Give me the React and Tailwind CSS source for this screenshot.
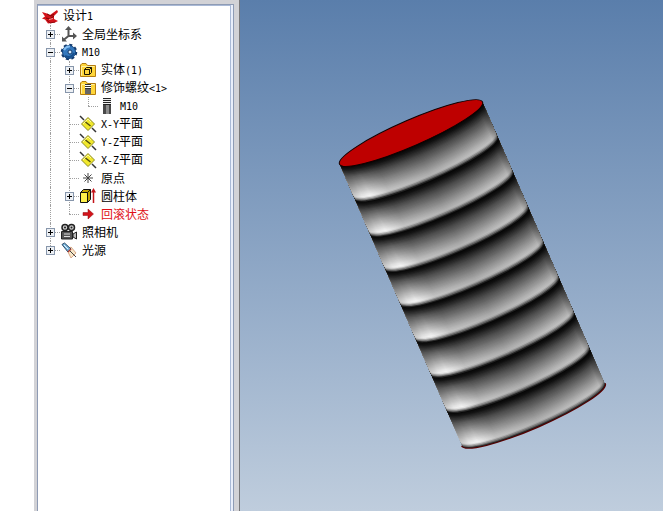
import { useState } from "react";

const TREE = {
  label: "设计1",
  icon: "design",
  children: [
    { label: "全局坐标系", icon: "axes", closed: true },
    {
      label: "M10",
      icon: "gear",
      children: [
        { label: "实体(1)", icon: "solids", closed: true },
        {
          label: "修饰螺纹<1>",
          icon: "threads",
          children: [{ label: "M10", icon: "thread" }],
        },
        { label: "X-Y平面", icon: "plane" },
        { label: "Y-Z平面", icon: "plane" },
        { label: "X-Z平面", icon: "plane" },
        { label: "原点", icon: "origin" },
        { label: "圆柱体", icon: "extrude", closed: true },
        { label: "回滚状态", icon: "arrow", red: true },
      ],
    },
    { label: "照相机", icon: "camera", closed: true },
    { label: "光源", icon: "light", closed: true },
  ],
};

function Folder({ children }) {
  return (
    <>
      <path d="M1.5 15.5V4L3 2.5h4L8.500 4.500h8v11z" fill="#ffd63a" stroke="#b47d10" />
      <path d="M2.500 14.500v-9h13" fill="none" stroke="#fff0a0" />
      {children}
    </>
  );
}

const ICONS = {
  design: (
    <>
      <path d="M1 5l5 1.500 3 1.500 7-5 1 2-4 4v3l4 2-3 1.500-7 1-3-4-3-1 3-2z" fill="#d3131a" />
      <path d="M6 7l4 2 3-2M5 11l4 1 4-3" fill="none" stroke="#7c0508" />
      <path d="M6 13l3 3 5-1" fill="none" stroke="#8f0a0e" />
      <path d="M8 12.500l4-1" stroke="#ff9b98" />
    </>
  ),
  axes: (
    <>
      <path d="M8.500 3v8h6M8.500 11l-5 4" fill="none" stroke="#555" strokeWidth="2" />
      <path d="M5 5l3.500-4L12 5zM13 7.500l4 3.500-4 3.500zM2 11.500v5h5z" fill="#555" />
    </>
  ),
  gear: (
    <>
      <circle cx="9" cy="9" r="7" fill="none" stroke="#12396b" strokeWidth="2.500" strokeDasharray="3 2.500" />
      <circle cx="9" cy="9" r="6.500" fill="#3478bd" stroke="#15457e" />
      <path d="M4 7q2-4 6-3.500" fill="none" stroke="#83bdf0" strokeWidth="2" />
      <path d="M5 13q6 3 9-3" fill="none" stroke="#174f8d" strokeWidth="2" />
      <circle cx="10" cy="9" r="2" fill="#d6ecff" stroke="#123768" />
    </>
  ),
  solids: (
    <Folder>
      <path d="M5.500 8.500l2-2h5v5l-2 2h-5zM5.500 8.500h5v5M10.500 8.500l2-2" fill="none" stroke="#1c1600" />
    </Folder>
  ),
  threads: (
    <Folder>
      <path d="M6 5h6v10H6z" fill="#666" />
      <path d="M6 6.500h6M6 8.500h6" stroke="#fff" />
      <path d="M6 5.500h6M6 7.500h6M6 9.500h6" stroke="#333" />
    </Folder>
  ),
  thread: (
    <>
      <path d="M5 8h8v9H5z" fill="#484848" />
      <path d="M8 8h3v9H8z" fill="#8c8c8c" />
      <path d="M5 1.500h8M5 3.500h8M5 5.500h8M5 7.500h8" stroke="#222" />
      <path d="M5 2.500h8M5 4.500h8M5 6.500h8" stroke="#eee" />
    </>
  ),
  plane: (
    <>
      <path d="M1 1l4 4M13 13l4 4" stroke="#333" strokeWidth="1.500" />
      <path d="M9 2.500L15.500 9 9 15.500 2.500 9z" fill="#f1e82c" stroke="#8c8a28" />
      <path d="M4 9l5-5 3 3" fill="none" stroke="#fffb9b" />
      <path d="M6.500 7l5 4" stroke="#4d4a10" strokeWidth="1.500" />
    </>
  ),
  origin: <path d="M9 4v10M4 9h10M5.500 5.500l7 7M12.500 5.500l-7 7" stroke="#444" />,
  extrude: (
    <>
      <path d="M1.500 5.500l3-3h7v10l-3 3h-7z" fill="#c3a600" stroke="#111" />
      <path d="M2 6h6v9H2z" fill="#fff04a" />
      <path d="M1.500 5.500h7v10M8.500 5.500l3-3" fill="none" stroke="#111" />
      <path d="M14.500 16V4" stroke="#c3141a" strokeWidth="1.500" />
      <path d="M12 5.500L14.500 1 17 5.500z" fill="#c3141a" />
    </>
  ),
  arrow: <path d="M4 7.500h5V4l5.500 5L9 14v-3.500H4z" fill="#d3131a" stroke="#8f0a0e" strokeWidth=".5" />,
  camera: (
    <>
      <circle cx="5" cy="4.500" r="3" fill="#ccc" stroke="#222" strokeWidth="1.500" />
      <circle cx="11.500" cy="4.500" r="3" fill="#ccc" stroke="#222" strokeWidth="1.500" />
      <circle cx="5" cy="4.500" r="1" fill="#222" />
      <circle cx="11.500" cy="4.500" r="1" fill="#222" />
      <path d="M1.500 8.500h11V16h-11z" fill="#555" stroke="#222" />
      <path d="M4 11h6M4 13.500h6" stroke="#ddd" />
      <path d="M13 11l3.500-2v7L13 14z" fill="#bbb" stroke="#222" />
    </>
  ),
  light: (
    <>
      <path d="M7 9l4-3 5 6-5 5z" fill="#f8e7c8" stroke="#d8a98a" />
      <path d="M2 3.500L4.500 2 11 8l-3 3z" fill="#76b4dc" stroke="#2d4b68" />
      <path d="M4 4l4 4" stroke="#e6f7ff" />
      <path d="M8 11l3-3" stroke="#b3382c" strokeWidth="1.500" />
      <path d="M10 10l6 6" stroke="#444" />
    </>
  ),
};

function NodeIcon({ name }) {
  return (
    <svg viewBox="0 0 18 18" className="h-[18px] w-[18px] shrink-0" aria-hidden="true">
      {ICONS[name]}
    </svg>
  );
}

// latin runs sit in half-width cells next to the full-width characters
function Label({ text }) {
  return text.split(/([\x20-\x7e]+)/).map((part, i) =>
    i % 2 ? (
      <span key={i} className="font-['DejaVu_Sans_Mono',monospace] text-[10px]">{part}</span>
    ) : (
      part
    )
  );
}

function TreeNode({ node, guides, last, root }) {
  const [open, setOpen] = useState(!node.closed);
  const expandable = !root && (node.children || node.closed);
  const below = root ? [] : [...guides, !last];

  return (
    <li>
      <div className="flex h-[18px] items-center">
        {guides.map((on, i) => (
          <span key={i} className="flex h-full w-[19px] shrink-0 justify-center">
            {on && <span className="h-full border-l border-dotted border-[#a0a0a0]" />}
          </span>
        ))}
        {!root && (
          <span className="relative flex h-full w-[19px] shrink-0 items-center justify-center">
            <span
              className={
                "absolute left-[9px] top-0 border-l border-dotted border-[#a0a0a0] " +
                (last ? "h-1/2" : "h-full")
              }
            />
            <span className="absolute left-[9px] right-0 top-[9px] border-t border-dotted border-[#a0a0a0]" />
            {expandable && (
              <button
                type="button"
                aria-label={open ? "collapse" : "expand"}
                onClick={() => setOpen(!open)}
                className="relative flex h-[9px] w-[9px] items-center justify-center border border-[#8796ab] bg-[#edf0f4]"
              >
                <svg viewBox="0 0 7 7" className="h-[7px] w-[7px] shrink-0">
                  <path d={open ? "M1 3.500h5" : "M1 3.500h5M3.500 1v5"} stroke="#000" />
                </svg>
              </button>
            )}
          </span>
        )}
        <NodeIcon name={node.icon} />
        <span className={"ml-[4px] whitespace-nowrap " + (node.red ? "text-[#e01018]" : "text-black")}>
          <Label text={node.label} />
        </span>
      </div>
      {open && node.children && (
        <ul>
          {node.children.map((child, i) => (
            <TreeNode key={i} node={child} guides={below} last={i === node.children.length - 1} />
          ))}
        </ul>
      )}
    </li>
  );
}

const RX = 78;
const RY = 13;
const PITCH = 38.4;
const TURNS = 8;
const STEPS = 32;

// brightness down one turn of the thread: [position, value]
const PROFILE = [[0, 5], [0.08, 16], [0.3, 76], [0.55, 128], [0.8, 178], [0.88, 190], [0.95, 100], [1, 5]];
// reflection across the barrel: [position, factor]
const ACROSS = [[0, 1.05], [0.05, 1.25], [0.1, 1.3], [0.22, 1.05], [0.5, 0.95], [0.85, 1.02], [0.96, 1], [1, 0.7]];

function shade(t) {
  const i = Math.max(1, PROFILE.findIndex(([p]) => p >= t));
  const [p0, v0] = PROFILE[i - 1];
  const [p1, v1] = PROFILE[i];
  return v0 + ((v1 - v0) * (t - p0)) / (p1 - p0);
}

function Cylinder() {
  const slices = [];
  // bottom slice first, each higher one covers the part above it
  for (let i = TURNS * STEPS; i > 0; i--) {
    slices.push({ y: (i * PITCH) / STEPS, step: (i - 1) % STEPS });
  }

  return (
    <svg width="272" height="354" viewBox="336 97 272 354" role="img" aria-label="M10" className="shrink-0">
      <defs>
        <clipPath id="barrel">
          <path d={`M${-RX} 0V307A${RX} ${RY} 0 0 0 ${RX} 307V0A${RX} ${RY} 0 0 0 ${-RX} 0z`} />
        </clipPath>
        {Array.from({ length: STEPS }, (_, s) => (
          <linearGradient key={s} id={`s${s}`} gradientUnits="userSpaceOnUse" x1={-RX} x2={RX} y1="0" y2="0">
            {ACROSS.map(([p, f]) => {
              const v = Math.min(255, Math.round(shade((s + 0.5) / STEPS) * f));
              return <stop key={p} offset={p} stopColor={`rgb(${v},${v},${v})`} />;
            })}
          </linearGradient>
        ))}
      </defs>
      <g transform="translate(411 133) rotate(-23.5)">
        <path
          d={`M${-RX} 307A${RX} ${RY} 0 0 0 ${RX} 307`}
          fill="none"
          stroke="#500"
          strokeWidth="2"
        />
        <g clipPath="url(#barrel)">
          {slices.map(({ y, step }) => (
            <path
              key={y}
              d={`M${-RX} 0V${y}A${RX} ${RY} 0 0 0 ${RX} ${y}V0z`}
              fill={`url(#s${step})`}
            />
          ))}
        </g>
        <ellipse rx={RX} ry={RY} fill="#be0000" stroke="#100" />
      </g>
    </svg>
  );
}

export default function App() {
  return (
    <div className="flex min-h-screen bg-white">
      <aside className="ml-[34px] flex w-[206px] shrink-0 border-r border-[#77777a] bg-[#d2d2d6] pl-[3px] pr-[5px] pt-[4px]">
        <nav className="flex-1 border-x border-t border-[#8e9bb4] bg-[#e9eefa] pr-[2px]">
          <div className="h-full border-r border-t border-[#a9b9d6] bg-white pl-[3px] pt-px font-['Noto_Sans_CJK_SC',sans-serif] text-[12px] leading-[18px]">
            <ul>
              <TreeNode node={TREE} guides={[]} root />
            </ul>
          </div>
        </nav>
      </aside>
      <main className="flex flex-1 items-start overflow-hidden bg-linear-to-b from-[#5a7eab] to-[#bfcddd] pl-[96px] pt-[97px]">
        <Cylinder />
      </main>
    </div>
  );
}
